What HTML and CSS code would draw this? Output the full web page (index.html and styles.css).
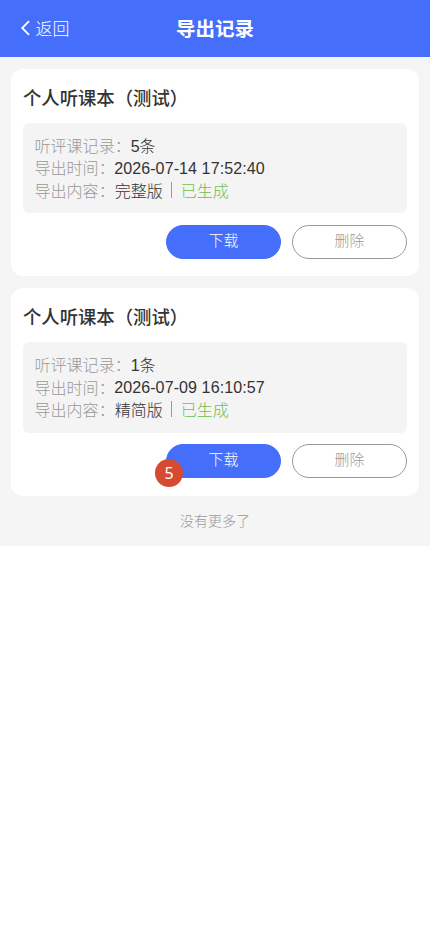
FILE: index.html
```
<!DOCTYPE html>
<html lang="zh-CN">
<head>
<meta charset="UTF-8">
<meta name="viewport" content="width=device-width, initial-scale=1">
<title>导出记录</title>
<link rel="stylesheet" href="styles.css">
</head>
<body>
<div class="page">
  <header class="navbar">
    <a class="back"><svg class="chevron" viewBox="0 0 10 16"><path d="M9 1.200 2.200 8 9 14.800"/></svg><span>返回</span></a>
    <h1 class="navbar-title">导出记录</h1>
  </header>
  <main class="list">
    <section class="card">
      <h2 class="card-title">个人听课本（测试）</h2>
      <div class="info">
        <div class="row"><span class="label">听评课记录：</span><span>5条</span></div>
        <div class="row"><span class="label">导出时间：</span><span class="date">2026-07-14 17:52:40</span></div>
        <div class="row"><span class="label">导出内容：</span><span>完整版</span><span class="status">已生成</span></div>
      </div>
      <div class="actions">
        <button class="btn primary">下载</button>
        <button class="btn plain">删除</button>
      </div>
    </section>
    <section class="card">
      <h2 class="card-title">个人听课本（测试）</h2>
      <div class="info">
        <div class="row"><span class="label">听评课记录：</span><span>1条</span></div>
        <div class="row"><span class="label">导出时间：</span><span class="date">2026-07-09 16:10:57</span></div>
        <div class="row"><span class="label">导出内容：</span><span>精简版</span><span class="status">已生成</span></div>
      </div>
      <div class="actions">
        <button class="btn primary">下载<span class="badge">5</span></button>
        <button class="btn plain">删除</button>
      </div>
    </section>
  </main>
  <p class="no-more">没有更多了</p>
</div>
</body>
</html>
```
FILE: styles.css
```
* { box-sizing: border-box; }
body {
  margin: 0;
  background: #fff;
  color: #333;
  font-family: "Liberation Sans", "Noto Sans CJK SC", sans-serif;
}
h1, h2, p { margin: 0; }
.page { height: 546px; background: #f5f5f5; }
.navbar {
  display: grid;
  grid-template-columns: 1fr auto 1fr;
  align-items: center;
  height: 57px;
  padding: 0 20px 1px;
  background: #456ffb;
  color: #fff;
}
.back { display: flex; align-items: center; gap: 5.500px; font-size: 17px; font-weight: 300; }
.back span { padding-bottom: 1px; }
.chevron { width: 10px; height: 16px; fill: none; stroke: currentColor; stroke-width: 1.8; }
.navbar-title { padding-bottom: 1px; font-size: 19.5px; font-weight: 700; }
.list { display: flex; flex-direction: column; gap: 11.900px; padding: 11.900px 11px 0; }
.card { height: 207.400px; padding: 12px; border-radius: 12px; background: #fff; }
.card-title { height: 42px; line-height: 36.500px; font-size: 18.35px; font-weight: 500; }
.info { height: 90.500px; padding: 11.300px 11.500px; border-radius: 6px; background: #f4f4f4; }
.row { display: flex; align-items: center; height: 22.500px; padding-bottom: 1px; font-size: 16.05px; font-weight: 300; }
.label { color: #999; }
.date { margin: 1.600px 0 0 -0.500px; letter-spacing: 0.090px; }
.status { display: flex; align-items: center; color: #6cbf4c; }
.status::before { content: ""; width: 1px; height: 16px; margin: 0 9px 0 8px; background: currentColor; }
.actions { display: flex; justify-content: flex-end; gap: 11px; margin-top: 11.500px; }
.btn {
  position: relative;
  width: 115px;
  height: 34px;
  padding: 0 0 4.500px;
  border: 1px solid #456ffb;
  border-radius: 17px;
  font: 300 14.900px "Liberation Sans", "Noto Sans CJK SC", sans-serif;
}
.primary { background: #456ffb; color: #fff; }
.plain { border-color: #999; background: #fff; color: #999; }
.badge {
  position: absolute;
  left: -12px;
  top: 14px;
  width: 28px;
  height: 28px;
  border-radius: 50%;
  background: #d64a31;
  font: 400 16px/28px "Noto Sans", sans-serif;
}
.no-more { padding-top: 15px; text-align: center; color: #999; font-size: 14px; line-height: 20px; font-weight: 300; }
```
